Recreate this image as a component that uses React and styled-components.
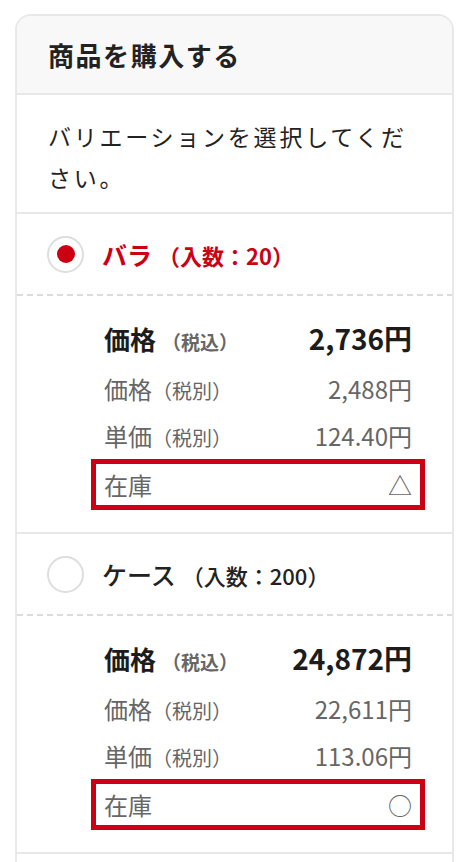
import React from "react";
import styled, { createGlobalStyle } from "styled-components";

const GlobalStyle = createGlobalStyle`
  * { box-sizing: border-box; }
  body {
    margin: 0;
    background: #fff;
    font-family: "Noto Sans CJK JP", "Noto Sans", sans-serif;
    color: #222;
  }
`;

const Page = styled.div`
  padding: 14px 14px 0 15px;
  height: 862px;
  overflow: hidden;
`;

const Card = styled.section`
  border: 2px solid #e8e8e8;
  border-bottom: none;
  border-radius: 16px 16px 0 0;
  overflow: hidden;
`;

const Header = styled.h2`
  margin: 0;
  height: 79px;
  display: flex;
  align-items: center;
  padding-left: 31px;
  background: #f8f8f8;
  border-bottom: 2px solid #e8e8e8;
  font-size: 26px;
  font-weight: 700;
  letter-spacing: 0.06em;
  color: #222;
`;

const Lead = styled.p`
  margin: 0;
  padding: 21px 20px 14px 31px;
  font-size: 23px;
  line-height: 41px;
  letter-spacing: 0.12em;
  border-bottom: 2px solid #e8e8e8;
`;

const Variation = styled.div`
  border-bottom: 2px solid #e8e8e8;
`;

const OptionRow = styled.label`
  display: flex;
  align-items: center;
  gap: 18px;
  height: 80px;
  padding-left: 30px;
  cursor: pointer;
`;

const Radio = styled.span`
  width: 37px;
  height: 37px;
  border-radius: 50%;
  border: 2px solid #dedede;
  display: flex;
  align-items: center;
  justify-content: center;
  flex-shrink: 0;

  &::after {
    content: "";
    width: 18px;
    height: 18px;
    border-radius: 50%;
    background: ${(p) => (p.checked ? "#cc0012" : "transparent")};
  }
`;

const OptionName = styled.span`
  font-size: 25px;
  font-weight: ${(p) => (p.checked ? 700 : 500)};
  color: ${(p) => (p.checked ? "#cc0012" : "#222")};
`;

const OptionQty = styled.span`
  font-size: 22px;
  font-weight: ${(p) => (p.checked ? 700 : 500)};
  margin-left: 6px;
`;

const Dashed = styled.div`
  height: 2px;
  background: repeating-linear-gradient(
    to right,
    #dcdcdc 0 6px,
    transparent 6px 10px
  );
`;

const Details = styled.div`
  padding: 15px 27px 22px 74px;
`;

const PriceRow = styled.div`
  display: flex;
  align-items: center;
  justify-content: space-between;
  height: ${(p) => (p.main ? "54px" : "47px")};
  padding: 0 13px;
  color: ${(p) => (p.main ? "#1c1c1c" : "#666")};
`;

const Label = styled.span`
  font-size: ${(p) => (p.main ? "26px" : "24px")};
  font-weight: ${(p) => (p.main ? 700 : 400)};
`;

const Tax = styled.small`
  font-size: ${(p) => (p.main ? "19px" : "20px")};
  font-weight: ${(p) => (p.main ? 700 : 400)};
  color: #666;
  margin-left: ${(p) => (p.main ? "6px" : "0")};
`;

const Value = styled.span`
  font-size: ${(p) => (p.main ? "28px" : "24px")};
  font-weight: ${(p) => (p.main ? 700 : 400)};
`;

const StockRow = styled.div`
  display: flex;
  align-items: center;
  justify-content: space-between;
  height: 51px;
  padding: 0 8px;
  border: 5px solid #cc0012;
  color: #666;
  font-size: 24px;
`;

const StockMark = styled.span`
  font-size: 24px;
  line-height: 1;
`;

const NextSection = styled.div`
  height: 120px;
`;

const variations = [
  {
    name: "バラ",
    qty: "20",
    checked: true,
    withTax: "2,736円",
    noTax: "2,488円",
    unit: "124.40円",
    stock: "△",
  },
  {
    name: "ケース",
    qty: "200",
    checked: false,
    withTax: "24,872円",
    noTax: "22,611円",
    unit: "113.06円",
    stock: "○",
  },
];

export default function App() {
  return (
    <>
      <GlobalStyle />
      <Page>
        <Card>
          <Header>商品を購入する</Header>
          <Lead>バリエーションを選択してください。</Lead>
          {variations.map((v) => (
            <Variation key={v.name}>
              <OptionRow>
                <Radio checked={v.checked} />
                <OptionName checked={v.checked}>
                  {v.name}
                  <OptionQty checked={v.checked}>（入数：{v.qty}）</OptionQty>
                </OptionName>
              </OptionRow>
              <Dashed />
              <Details>
                <PriceRow main>
                  <Label main>
                    価格<Tax main>（税込）</Tax>
                  </Label>
                  <Value main>{v.withTax}</Value>
                </PriceRow>
                <PriceRow>
                  <Label>
                    価格<Tax>（税別）</Tax>
                  </Label>
                  <Value>{v.noTax}</Value>
                </PriceRow>
                <PriceRow>
                  <Label>
                    単価<Tax>（税別）</Tax>
                  </Label>
                  <Value>{v.unit}</Value>
                </PriceRow>
                <StockRow>
                  <span>在庫</span>
                  <StockMark>{v.stock}</StockMark>
                </StockRow>
              </Details>
            </Variation>
          ))}
          <NextSection />
        </Card>
      </Page>
    </>
  );
}
